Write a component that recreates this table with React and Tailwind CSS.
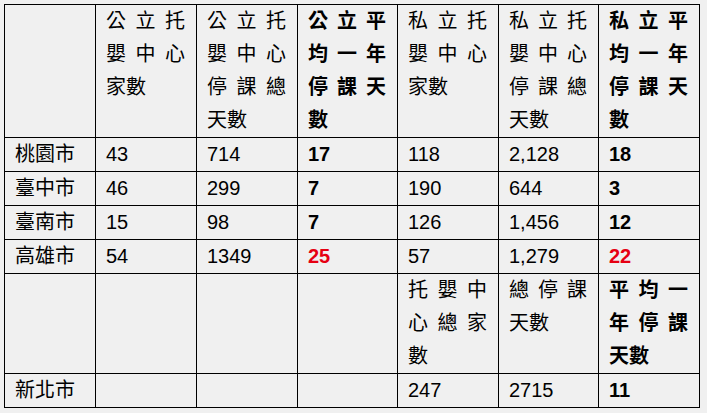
const cols = [91, 101, 101, 100, 101, 100, 101];

const rows = [
  ['桃園市', '43', '714', '17', '118', '2,128', '18'],
  ['臺中市', '46', '299', '7', '190', '644', '3'],
  ['臺南市', '15', '98', '7', '126', '1,456', '12'],
  ['高雄市', '54', '1349', '25', '57', '1,279', '22'],
];

const Cell = ({ children, bold, red, head }) => (
  <td
    className={`border border-black align-top pl-[10px] pr-[11px] py-0 leading-[33px] text-[20px] ${
      head ? 'text-justify' : 'text-left'
    } ${bold ? 'font-bold' : 'font-normal'} ${red ? 'text-[#e60012]' : 'text-black'}`}
  >
    {children}
  </td>
);

export default function App() {
  return (
    <div className="w-[707px] h-[413px] bg-[#f0f0f0] p-[4px] font-['Liberation_Sans','Noto_Sans_CJK_TC',sans-serif]">
      <table className="table-fixed border-collapse w-[696px]">
        <colgroup>
          {cols.map((w, i) => (
            <col key={i} style={{ width: w }} />
          ))}
        </colgroup>
        <tbody>
          <tr>
            <Cell head />
            <Cell head>公立托嬰中心家數</Cell>
            <Cell head>公立托嬰中心停課總天數</Cell>
            <Cell head bold>公立平均一年停課天數</Cell>
            <Cell head>私立托嬰中心家數</Cell>
            <Cell head>私立托嬰中心停課總天數</Cell>
            <Cell head bold>私立平均一年停課天數</Cell>
          </tr>
          {rows.map((r) => (
            <tr key={r[0]}>
              {r.map((v, i) => (
                <Cell key={i} bold={i === 3 || i === 6} red={r[0] === '高雄市' && (i === 3 || i === 6)}>
                  {v}
                </Cell>
              ))}
            </tr>
          ))}
          <tr>
            <Cell />
            <Cell />
            <Cell />
            <Cell />
            <Cell head>托嬰中心總家數</Cell>
            <Cell head>總停課天數</Cell>
            <Cell head bold>平均一年停課天數</Cell>
          </tr>
          <tr>
            <Cell>新北市</Cell>
            <Cell />
            <Cell />
            <Cell />
            <Cell>247</Cell>
            <Cell>2715</Cell>
            <Cell bold>11</Cell>
          </tr>
        </tbody>
      </table>
    </div>
  );
}
